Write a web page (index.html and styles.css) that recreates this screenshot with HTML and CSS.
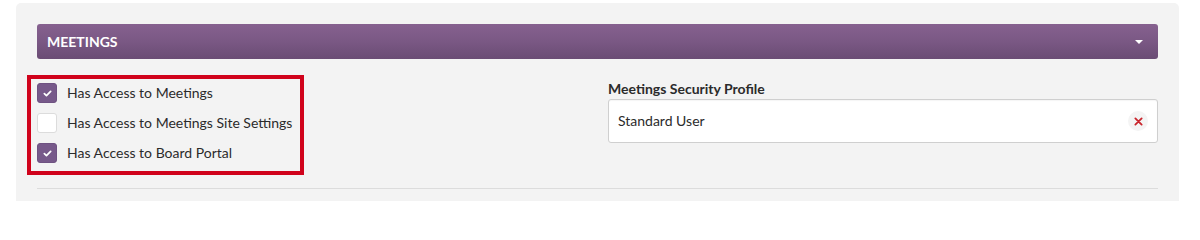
FILE: index.html
```html
<!DOCTYPE html>
<html lang="en">
<head>
<meta charset="utf-8">
<title>Meetings</title>
<link rel="stylesheet" href="styles.css">
</head>
<body>
<div class="panel">
  <div class="section-header">
    <span class="section-title">MEETINGS</span>
    <span class="caret"></span>
  </div>
  <div class="section-body">
    <div class="col">
      <div class="highlight">
        <label class="check-row">
          <span class="checkbox checked">
            <svg viewBox="0 0 10 8" width="9" height="7"><path d="M1.4 4.2 L3.8 6.4 L8.6 1.6" fill="none" stroke="#fff" stroke-width="2" stroke-linecap="round" stroke-linejoin="round"/></svg>
          </span>
          <span class="check-label">Has Access to Meetings</span>
        </label>
        <label class="check-row">
          <span class="checkbox"></span>
          <span class="check-label">Has Access to Meetings Site Settings</span>
        </label>
        <label class="check-row">
          <span class="checkbox checked">
            <svg viewBox="0 0 10 8" width="9" height="7"><path d="M1.4 4.2 L3.8 6.4 L8.6 1.6" fill="none" stroke="#fff" stroke-width="2" stroke-linecap="round" stroke-linejoin="round"/></svg>
          </span>
          <span class="check-label">Has Access to Board Portal</span>
        </label>
      </div>
    </div>
    <div class="col">
      <div class="field-label">Meetings Security Profile</div>
      <div class="select-box">
        <span class="select-value">Standard User</span>
        <span class="clear-btn">
          <svg viewBox="0 0 10 10" width="9" height="9"><path d="M1.5 1.5 L8.5 8.5 M8.5 1.5 L1.5 8.5" stroke="#c9252c" stroke-width="2" stroke-linecap="round"/></svg>
        </span>
      </div>
    </div>
  </div>
  <div class="divider"></div>
</div>
</body>
</html>
```

FILE: styles.css
```css
html, body {
  margin: 0;
  padding: 0;
  background: #ffffff;
  height: 201px;
  overflow: hidden;
}
body {
  font-family: Lato, "Open Sans", "Liberation Sans", sans-serif;
  font-size: 14px;
  color: #2b2b2b;
}
.panel {
  margin: 3px 21px 0 16px;
  padding: 21px 21px 40px 21px;
  background: #f3f3f3;
  border-radius: 5px 5px 0 0;
}
.section-header {
  height: 35px;
  box-sizing: border-box;
  padding: 0 15px 0 10px;
  display: flex;
  align-items: center;
  justify-content: space-between;
  border-radius: 3px;
  background: linear-gradient(to bottom, #86618f 0%, #7a5884 50%, #6a4c74 100%);
}
.section-title {
  color: #ffffff;
  font-weight: 700;
  font-size: 14px;
  line-height: 20px;
}
.caret {
  width: 0;
  height: 0;
  border-left: 4px solid transparent;
  border-right: 4px solid transparent;
  border-top: 4px solid #ffffff;
  margin-top: 1px;
}
.section-body {
  margin-top: 16px;
  display: grid;
  grid-template-columns: 1fr 550px;
  column-gap: 21px;
}
.highlight {
  display: inline-flex;
  flex-direction: column;
  gap: 10px;
  margin-left: -10px;
  padding: 4px 8px 8px 6px;
  border: 4px solid #d0021b;
}
.check-row {
  display: flex;
  align-items: center;
  gap: 10px;
  line-height: 20px;
  height: 20px;
}
.checkbox {
  width: 20px;
  height: 20px;
  box-sizing: border-box;
  border-radius: 3px;
  background: #ffffff;
  border: 1px solid #dcdcdc;
  display: flex;
  align-items: center;
  justify-content: center;
}
.checkbox.checked {
  background: #77598a;
  border-color: #6f5282;
}
.check-label {
  font-size: 14px;
  color: #2b2b2b;
}
.col {
  min-width: 0;
}
.field-label {
  margin-top: 4px;
  font-weight: 700;
  line-height: 20px;
  color: #2b2b2b;
}
.select-box {
  height: 44px;
  box-sizing: border-box;
  background: #ffffff;
  border: 1px solid #cfcfcf;
  border-radius: 3px;
  box-shadow: inset 0 1px 1px rgba(0,0,0,0.04);
  display: flex;
  align-items: center;
  justify-content: space-between;
  padding: 0 9px 0 9px;
}
.select-value {
  line-height: 20px;
  color: #2b2b2b;
}
.clear-btn {
  width: 20px;
  height: 20px;
  border-radius: 50%;
  background: #f4f4f4;
  display: flex;
  align-items: center;
  justify-content: center;
}
.divider {
  margin-top: 13px;
  height: 1px;
  background: #dcdcdc;
}
```
